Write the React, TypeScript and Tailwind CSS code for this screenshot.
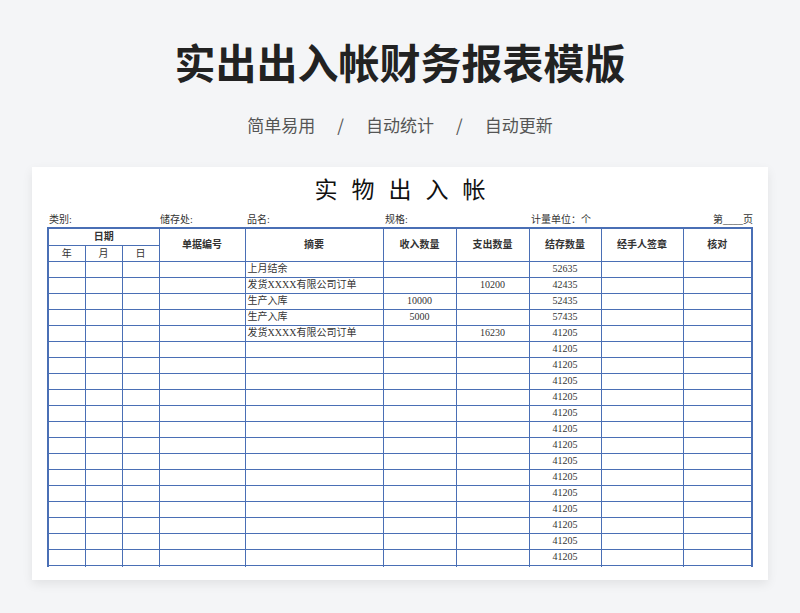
import React from "react";

const cols = [37, 37, 37, 86, 138, 73, 73, 72, 82, 69];
const data: [string, string, string, string][] = [
  ["上月结余", "", "", "52635"],
  ["发货XXXX有限公司订单", "", "10200", "42435"],
  ["生产入库", "10000", "", "52435"],
  ["生产入库", "5000", "", "57435"],
  ["发货XXXX有限公司订单", "", "16230", "41205"],
];
const rows = Array.from({ length: 20 }, (_, i) => (i === 19 ? ["", "", "", ""] : data[i] ?? ["", "", "", "41205"]));
const cell = "border border-[#4a6fb5] p-0";
const f = { fontFamily: '"Liberation Serif","Noto Sans CJK SC",serif' };

export default function App() {
  return (
    <div className="w-[800px] h-[613px] bg-[#f4f5f7] overflow-hidden flex flex-col items-center" style={{ fontFamily: '"Noto Sans CJK SC",sans-serif' }}>
      <div className="mt-[33px] h-[56px] text-[41px] leading-[56px] font-bold text-[#222]">实出出入帐财务报表模版</div>
      <div className="mt-[24px] h-[24px] text-[17px] leading-[24px] text-[#555] flex gap-[22px]">
        <span>简单易用</span><span>/</span><span>自动统计</span><span>/</span><span>自动更新</span>
      </div>
      <div className="mt-[30px] w-[736px] h-[413px] bg-white shadow-[0_4px_10px_rgba(0,0,0,0.08)] flex flex-col px-[15px] overflow-hidden" style={f}>
        <div className="mt-[9px] h-[30px] text-[23px] leading-[30px] text-center tracking-[14px] pl-[14px] text-[#111]">实物出入帐</div>
        <div className="mt-[7px] h-[14px] text-[10px] leading-[14px] text-[#333] relative">
          <span className="absolute left-[2px]">类别:</span>
          <span className="absolute left-[113px]">储存处:</span>
          <span className="absolute left-[200px]">品名:</span>
          <span className="absolute left-[338px]">规格:</span>
          <span className="absolute left-[484px]">计量单位：个</span>
          <span className="absolute right-[0px]">第____页</span>
        </div>
        <div className="h-[340px] overflow-hidden">
          <table className="border-collapse table-fixed w-[704px] border-2 border-[#4a6fb5] text-[10px] text-[#333]">
            <colgroup>{cols.map((w, i) => <col key={i} style={{ width: w }} />)}</colgroup>
            <thead>
              <tr className="h-[17px] font-bold">
                <th colSpan={3} className={cell}>日期</th>
                <th rowSpan={2} className={cell}>单据编号</th>
                <th rowSpan={2} className={cell}>摘要</th>
                <th rowSpan={2} className={cell}>收入数量</th>
                <th rowSpan={2} className={cell}>支出数量</th>
                <th rowSpan={2} className={cell}>结存数量</th>
                <th rowSpan={2} className={cell}>经手人签章</th>
                <th rowSpan={2} className={cell}>核对</th>
              </tr>
              <tr className="h-[16px]">
                <td className={cell + " text-center"}>年</td>
                <td className={cell + " text-center"}>月</td>
                <td className={cell + " text-center"}>日</td>
              </tr>
            </thead>
            <tbody>
              {rows.map((r, i) => (
                <tr key={i} className="h-[16px] leading-[14px]">
                  <td className={cell}></td><td className={cell}></td><td className={cell}></td><td className={cell}></td>
                  <td className={cell + " pl-[2px]"}>{r[0]}</td>
                  <td className={cell + " text-center"}>{r[1]}</td>
                  <td className={cell + " text-center"}>{r[2]}</td>
                  <td className={cell + " text-center"}>{r[3]}</td>
                  <td className={cell}></td><td className={cell}></td>
                </tr>
              ))}
            </tbody>
          </table>
        </div>
      </div>
    </div>
  );
}
